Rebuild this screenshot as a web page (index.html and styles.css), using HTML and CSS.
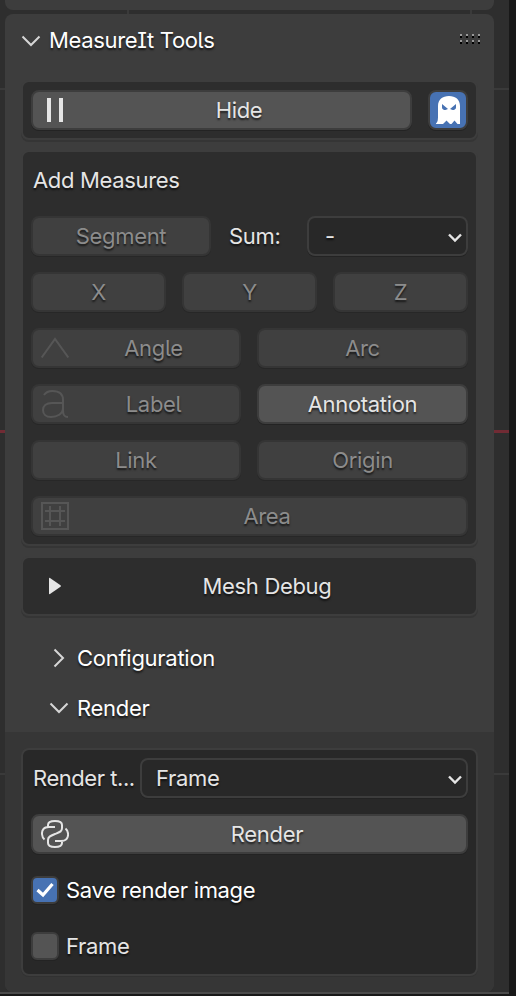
FILE: index.html
```html
<!DOCTYPE html>
<html lang="en">
<head>
<meta charset="utf-8">
<title>MeasureIt Tools</title>
<link rel="stylesheet" href="styles.css">
</head>
<body>
<main class="viewport">
  <div class="sidebar">
    <div class="previous"></div>
    <section class="panel">
      <header class="panel-header">
        <svg class="chevron" width="20" height="12" viewBox="0 0 20 12"><path d="M1.5 1.5 10 10 18.500 1.500"/></svg>
        <span class="title">MeasureIt Tools</span>
        <svg class="grip" width="20" height="10" viewBox="0 0 20 10" shape-rendering="crispEdges"><path fill="#999" d="M0 0h2v2H0zM6 0h2v2H6zM12 0h2v2h-2zM18 0h2v2h-2zM0 6h2v2H0zM6 6h2v2H6zM12 6h2v2h-2zM18 6h2v2h-2z"/><path fill="#000" d="M0 2h2v2H0zM6 2h2v2H6zM12 2h2v2h-2zM18 2h2v2h-2zM0 8h2v2H0zM6 8h2v2H6zM12 8h2v2h-2zM18 8h2v2h-2z"/></svg>
      </header>

      <div class="panel-body">
        <div class="box">
          <div class="row">
            <button class="btn has-icon grow"><svg class="icon" viewBox="0 0 28 28"><path class="solid" d="M6 2h4v24H6zM18 2h4v24h-4z"/></svg>Hide</button>
            <button class="btn toggle" aria-label="Ghost"><svg width="28" height="28" viewBox="0 0 28 28"><path fill="#fff" fill-rule="evenodd" d="M2 27.500C4 26 4 23 4 19V10C4 3.500 8.500 0 15 0S26 3.500 26 10V28H23.500L20.500 24.500 17.500 28H16L12.500 24.500 9 28H2ZM8 8V11.500C8 13.500 10 14 11.500 14L14 13ZM22 8V11.500C22 13.500 20 14 18.500 14L16 13Z"/></svg></button>
          </div>
        </div>

        <div class="box">
          <div class="row text-row">Add Measures</div>
          <div class="row sum-row">
            <button class="btn off">Segment</button>
            <span class="sum">Sum:</span>
            <div class="select"><span>-</span><svg class="caret" width="14" height="10" viewBox="0 0 14 10"><path d="M1 1.500 7 7.500 13 1.500"/></svg></div>
          </div>
          <div class="row even"><button class="btn off">X</button><button class="btn off">Y</button><button class="btn off">Z</button></div>
          <div class="row even pair">
            <button class="btn off has-icon"><svg class="icon" viewBox="0 0 28 28"><path d="M.7 23.500 14 5 27.300 23.500"/></svg>Angle</button>
            <button class="btn off">Arc</button>
          </div>
          <div class="row even pair">
            <button class="btn off has-icon"><svg class="icon" viewBox="0 0 28 28"><path d="M3 5C5 2 8 1 11.500 1 18 1 22 4 22 10V20C22 25 23 27 27 27M22 13H11C5 13 2 16 2 20S5 27 10 27C16 27 22 24 22 18"/></svg>Label</button>
            <button class="btn">Annotation</button>
          </div>
          <div class="row even pair"><button class="btn off">Link</button><button class="btn off">Origin</button></div>
          <div class="row even">
            <button class="btn off has-icon"><svg class="icon" viewBox="0 0 28 28"><path d="M1 1H27V27H1ZM9 4V24M19 4V24M4 9H24M4 19H24"/></svg>Area</button>
          </div>
        </div>

        <div class="box">
          <div class="row debug has-icon"><svg class="icon" viewBox="0 0 28 28"><path class="solid" d="M8 6.500Q8 5.500 9 6L19.500 13.200Q20.500 14 19.500 14.800L9 22Q8 22.500 8 21.500Z"/></svg>Mesh Debug</div>
        </div>
      </div>

      <div class="sub-header"><span class="sub-icon"><svg class="chevron" width="12" height="20" viewBox="0 0 12 20"><path d="M1.500 1.500 10 10 1.500 18.500"/></svg></span>Configuration</div>
      <div class="sub-header"><span class="sub-icon"><svg class="chevron" width="20" height="12" viewBox="0 0 20 12"><path d="M1.500 1.500 10 10 18.500 1.500"/></svg></span>Render</div>

      <div class="sub-body">
        <div class="box deep">
          <div class="row type-row"><span class="type">Render t...</span><div class="select"><span>Frame</span><svg class="caret" width="14" height="10" viewBox="0 0 14 10"><path d="M1 1.500 7 7.500 13 1.500"/></svg></div></div>
          <div class="row even"><button class="btn has-icon"><svg class="icon" viewBox="0 0 28 28"><path d="M3.500 19.500C.5 17 .2 11.500 2.500 9 4 7 6 7 8 7H14M7 6.500V5C7 2 9 1 14 1S21 2 21 5V8C21 11.500 19 12 14 14S7 17 7 20V23C7 26 9 27 14 27S21 26 21 23V21M14 21H20C22 21 24 21 25.500 19 28 16 27.500 11 24.500 8.500"/></svg>Render</button></div>
          <div class="row check-row"><span class="check on"><svg width="20" height="16" viewBox="0 0 20 16"><path d="M2.500 8 8 13 17.500 2"/></svg></span><span class="bright">Save render image</span></div>
          <div class="row check-row"><span class="check"></span>Frame</div>
        </div>
      </div>
    </section>
  </div>
  <div class="divider"></div>
</main>
</body>
</html>
```
FILE: styles.css
```css
* { box-sizing: border-box; }

body {
  margin: 0;
  background: #181818;
  color: #e5e5e5;
  font: 22px/28px Inter, "Liberation Sans", sans-serif;
  font-feature-settings: "cv05", "cv08";
  letter-spacing: -.33px;
  text-shadow: 0 2px 2px rgba(0, 0, 0, .65);
}

.viewport {
  width: 516px;
  height: 996px;
  overflow: hidden;
}

.sidebar {
  width: 509px;
  height: 992px;
  padding: 0 15px 0 5px;
  background:
    linear-gradient(#3a3a3a, #3a3a3a) 0 88px / 100% 2px no-repeat,
    linear-gradient(#712b34, #712b34) 0 430px / 100% 3px no-repeat,
    linear-gradient(#3a3a3a, #3a3a3a) 0 773px / 100% 2px no-repeat,
    linear-gradient(#3a3a3a, #3a3a3a) 127px 0 / 2px 100% no-repeat,
    linear-gradient(#3a3a3a, #3a3a3a) 470px 0 / 2px 100% no-repeat,
    #2e2e2e;
}

.divider { width: 509px; height: 2px; background: #4b4b4b; }

.previous { height: 10px; margin-bottom: 4px; border-radius: 0 0 8px 8px; background: #3d3d3d; }

.panel { height: 978px; border-radius: 8px; background: #3d3d3d; overflow: hidden; }

.panel-header {
  display: flex;
  align-items: center;
  height: 52px;
  padding: 0 14px 0 16px;
  color: #fff;
}

.title { margin-left: 8px; flex: 1; }

.grip { margin-bottom: 3px; }

svg { display: block; flex: none; fill: none; }

.chevron { stroke: #d6d6d6; stroke-width: 2; }

.panel-header .chevron { margin-top: 2px; }

.panel-body {
  display: flex;
  flex-direction: column;
  gap: 10px;
  padding: 14px 16px 17px;
}

.box {
  display: flex;
  flex-direction: column;
  gap: 16px;
  padding: 8px;
  border: 2px solid #3d3d3d;
  border-radius: 8px;
  background: #2d2d2d;
  box-shadow: 0 2px 0 #353535;
}

.deep { background: #282828; box-shadow: 0 1px 0 #313131; }

.row { display: flex; align-items: center; height: 40px; }

.text-row { padding-left: 2px; }

.even {
  display: grid;
  grid-auto-flow: column;
  grid-auto-columns: minmax(0, 1fr);
  gap: 16px;
}

.btn {
  height: 40px;
  min-width: 0;
  padding: 0;
  border: 2px solid #3d3d3d;
  border-radius: 8px;
  background: #545454;
  box-shadow: 0 1px 0 #232323;
  color: inherit;
  font: inherit;
  font-feature-settings: inherit;
  letter-spacing: inherit;
  text-shadow: inherit;
  text-align: center;
}

.pair { grid-auto-columns: 210px 211px; }

.off { border-color: #353535; background: #404040; box-shadow: 0 1px 0 #272727; color: #8c8c8c; }

.has-icon {
  display: flex;
  position: relative;
  align-items: center;
  justify-content: center;
  padding-left: 35px;
}

.icon {
  position: absolute;
  left: 8px;
  width: 28px;
  height: 28px;
  stroke: #e5e5e5;
  stroke-width: 2;
}
.off > .icon { stroke: #565656; }
.icon .solid { fill: #e5e5e5; stroke: none; }

.grow { flex: 1; }

.toggle {
  display: flex;
  align-items: center;
  justify-content: center;
  width: 40px;
  margin-left: 16px;
  background: #4772b3;
}

.sum-row .btn { width: 180px; }
.sum { width: 96px; padding-left: 18px; }

.select {
  display: flex;
  flex: 1;
  align-items: center;
  justify-content: space-between;
  height: 40px;
  padding: 0 4px 0 14px;
  border: 2px solid #3d3d3d;
  border-radius: 8px;
  background: #282828;
  box-shadow: 0 1px 0 #232323;
}
.sum-row .select { padding-left: 16px; }

.caret { margin-top: 3px; stroke: #e5e5e5; stroke-width: 2.4; }

.debug > .icon { left: 10px; }

.sub-header { display: flex; align-items: center; height: 50px; padding-left: 44px; color: #fff; letter-spacing: -.27px; }
.sub-icon { display: flex; justify-content: center; width: 20px; margin-right: 8px; }

.sub-body { height: 260px; margin-top: -1px; padding: 16px; background: #363636; }

.type { width: 109px; padding-left: 2px; white-space: nowrap; letter-spacing: -.45px; }

.check {
  display: flex;
  align-items: center;
  justify-content: center;
  width: 28px;
  height: 28px;
  margin-right: 7px;
  border: 2px solid #3d3d3d;
  border-radius: 6px;
  background: #545454;
  box-shadow: 0 1px 0 #232323;
}
.on { background: #4772b3; }
.on path { stroke: #fff; stroke-width: 3.2; }
.bright { color: #fff; }
```
